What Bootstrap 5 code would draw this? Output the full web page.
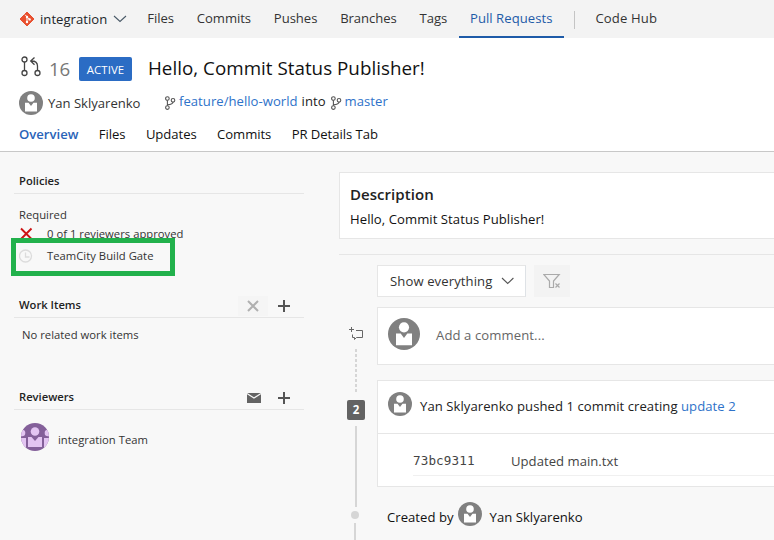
<!DOCTYPE html>
<html lang="en">
<head>
<meta charset="utf-8">
<meta name="viewport" content="width=device-width, initial-scale=1">
<title>Pull Request 16</title>
<link href="https://cdn.jsdelivr.net/npm/bootstrap@5.3.0/dist/css/bootstrap.min.css" rel="stylesheet">
<style>
body{font-family:"Open Sans","Noto Sans",sans-serif;font-size:13.1px;line-height:18px;letter-spacing:.03px;color:#212121;background:#f8f8f8;height:540px;white-space:nowrap}
a{color:#2e72c9}
svg{display:block;flex:none}
.hub-nav{height:38px;background:#f3f3f3;padding-left:19px}
.hub-name{margin-left:5px}
.hub-nav .nav-link{padding:0;height:38px;line-height:37px;color:#333;letter-spacing:-.05px;margin-right:22.8px}
.hub-nav .nav-link.active{color:#1e5ba8;border-bottom:2px solid #1e5ba8;letter-spacing:.04px;padding:0 12px 0 11px;margin:0 10px 0 -11px}
.hub-nav .nav-link:last-child{letter-spacing:.15px}
.hub-sep{width:1px;height:18px;background:#c4c4c4;margin-right:20px;margin-top:2px}
.pr-head{height:114px;border-bottom:1px solid #c8c8c8;padding:16px 0 0 19px}
.title-row{height:29px}
.pr-id{font-size:18.7px;color:#777;letter-spacing:-.3px;width:29px;padding-left:7px}
.state{width:53px;height:24px;background:#2b6cc4;border-radius:2px;font-size:11.4px;letter-spacing:.05px;line-height:25px;font-weight:400;padding:0}
.pr-title{font-size:18.8px;font-weight:400;letter-spacing:.02px;line-height:28px;margin:-2px 0 0 16px;color:#111}
.who-row{height:24px;margin-top:8px}
.who-name{width:121px;color:#333;padding-left:5px;letter-spacing:-.02px}
.pr-tabs{margin-top:9px;gap:20.4px;color:#111}
.pr-tabs .nav-link{padding:0;color:#111;line-height:20px;letter-spacing:-.05px}
.pr-tabs .nav-link.active{color:#2a63b8;font-weight:600;letter-spacing:0}
.side{width:290px;margin-left:14px;font-size:11.25px;letter-spacing:.02px;line-height:16px;color:#333}
.side-h{font-weight:600;font-size:11.2px;letter-spacing:0;padding-left:5px;border-bottom:1px solid #e6e6e6;color:#222;height:24px;line-height:22px}
.side-btn{width:30px;height:20px}
.side-add{margin-left:1px;margin-right:5px}
.policy{height:22px;padding-left:5px}
.policy svg{margin-right:13px}
.mark-box{left:11px;top:238px;width:164px;height:38px;border:5px solid #22b14c}
.main-col{margin-left:35px;min-width:0}
.panel{background:#fff;border:1px solid #e6e6e6;border-right:0}
.desc{height:67px;margin-top:20px;padding:10px 0 0 10px;color:#111}
.desc h2{font-size:15px;font-weight:600;letter-spacing:.05px;line-height:22px;margin:0 0 5px;color:#222}
.desc div{letter-spacing:.06px}
.rule{height:1px;background:#e6e6e6;margin-top:15px}
.tl{width:38px}
.tl-dash{width:2px;height:45px;background:repeating-linear-gradient(#d6d6d6 0 3px,transparent 3px 5px)}
.tl-num{width:18px;height:20px;border-radius:2px;background:#636363;color:#fff;font-weight:700;font-size:11.5px;line-height:20px;text-align:center;letter-spacing:0}
.tl-line{width:2px;background:#d6d6d6}
.tl-dot{width:8px;height:8px;background:#d6d6d6}
.filter{width:149px;height:32px;padding-left:12px;color:#333;letter-spacing:.1px}
.clear-f{width:36px;height:32px;background:#f3f3f3}
.comment{height:58px;margin-top:10px;padding:0 0 2px 10px;color:#666;letter-spacing:.1px}
.push{height:107px;margin-top:15px}
.push-top{height:53px;border-bottom:1px solid #e6e6e6;padding:0 0 2px 10px;letter-spacing:.06px}
.commit{margin-left:35px;height:42px;border-bottom:1px solid #f0f0f0;color:#444;padding-top:12px}
.hash{font-family:"DejaVu Sans Mono",monospace;font-size:12.6px;letter-spacing:.12px;width:98px}
.created{margin:15px 0 0 10px;color:#111}
.created span{padding-top:2px}
</style>
</head>
<body class="overflow-hidden">
<svg width="0" height="0" class="position-absolute">
  <defs>
    <symbol id="person" viewBox="0 0 24 24">
      <circle cx="12" cy="12" r="12" fill="#808080"/>
      <circle cx="12" cy="7" r="3.800" fill="#fff"/>
      <path d="M6 11.700h3.500l2.500 3.300 2.500-3.300H18v8.800H6z" fill="#fff"/>
    </symbol>
    <symbol id="branch" viewBox="0 0 12 14">
      <g fill="none" stroke="#555" stroke-width="1.1"><circle cx="3.4" cy="2.5" r="1.8"/><circle cx="3.4" cy="11.6" r="1.8"/><circle cx="9" cy="4.3" r="1.8"/><path d="M3.4 4.3v5.5M9 6.100c0 2-1.500 2.500-5.600 2.600"/></g>
    </symbol>
    <symbol id="plus" viewBox="0 0 12 12"><path d="M0 6h12M6 0v12" stroke="#555" stroke-width="2"/></symbol>
  </defs>
</svg>

<nav class="hub-nav d-flex align-items-center">
  <svg width="16" height="16" viewBox="0 0 16 16"><path d="M8 1l7 7-7 7-7-7z" fill="#e8502f" stroke="#e8502f" stroke-width="1" stroke-linejoin="round"/><path d="M6 3.700l2 2v5.300M8 6l2.600 2.300" stroke="#fff" stroke-width="1" fill="none"/><circle cx="8" cy="6" r="1.200" fill="#fff"/><circle cx="8" cy="11" r="1.200" fill="#fff"/><circle cx="10.600" cy="8.400" r="1.200" fill="#fff"/></svg>
  <span class="hub-name text-dark">integration</span>
  <svg class="ms-1 me-3" width="16" height="12" viewBox="0 0 16 12"><path d="M3 3l6 5.500L15 3" fill="none" stroke="#4a5a68" stroke-width="1.100"/></svg>
  <div class="nav flex-nowrap ps-1 align-items-center">
    <a class="nav-link" href="#">Files</a>
    <a class="nav-link" href="#">Commits</a>
    <a class="nav-link" href="#">Pushes</a>
    <a class="nav-link" href="#">Branches</a>
    <a class="nav-link" href="#">Tags</a>
    <a class="nav-link active" href="#">Pull Requests</a>
    <span class="hub-sep"></span>
    <a class="nav-link" href="#">Code Hub</a>
  </div>
</nav>

<header class="pr-head bg-white">
  <div class="title-row d-flex align-items-center">
    <svg width="23" height="22" viewBox="0 0 23 22" class="mb-1"><g fill="none" stroke="#444" stroke-width="1.300"><circle cx="5.500" cy="3.500" r="2.500"/><circle cx="5.500" cy="17" r="2.500"/><circle cx="18.500" cy="17" r="2.500"/><path d="M5.500 6v8.500M18.500 14.500V10c0-3.500-1.500-5-6-5M15.500 1.500l-3.800 3.500 3.800 3.800"/></g></svg>
    <span class="pr-id">16</span>
    <span class="badge state ms-2">ACTIVE</span>
    <h1 class="pr-title">Hello, Commit Status Publisher!</h1>
  </div>
  <div class="who-row d-flex align-items-center">
    <svg width="24" height="24"><use href="#person"/></svg>
    <span class="who-name">Yan Sklyarenko</span>
    <div class="d-flex align-items-center pb-1">
      <svg width="12" height="14" class="mt-1"><use href="#branch"/></svg>
      <a class="text-decoration-none me-1" href="#" style="margin-left:3px">feature/hello-world</a>
      <span>into</span>
      <svg width="12" height="14" class="ms-1 mt-1"><use href="#branch"/></svg>
      <a class="text-decoration-none" href="#" style="margin-left:3px">master</a>
    </div>
  </div>
  <div class="pr-tabs nav flex-nowrap">
    <a class="nav-link active" href="#">Overview</a>
    <a class="nav-link" href="#">Files</a>
    <a class="nav-link" href="#">Updates</a>
    <a class="nav-link" href="#">Commits</a>
    <a class="nav-link" href="#">PR Details Tab</a>
  </div>
</header>

<div class="d-flex">
  <aside class="side flex-shrink-0">
    <div class="side-h" style="margin-top:18px">Policies</div>
    <div class="ps-1" style="margin-top:13px"><div style="padding-left:1px">Required</div></div>
    <div class="policy d-flex align-items-center">
      <svg width="15" height="14" viewBox="0 0 15 14"><path d="M2 1.500l10.500 10.500M12.500 1.500L2 12" stroke="#cc1414" stroke-width="1.900"/></svg>
      <span>0 of 1 reviewers approved</span>
    </div>
    <div class="policy d-flex align-items-center">
      <svg width="15" height="14" viewBox="0 0 15 14"><g fill="none" stroke="#dcdcdc" stroke-width="1.300"><circle cx="6.500" cy="7" r="6"/><path d="M6.500 3.500V8h4"/></g></svg>
      <span>TeamCity Build Gate</span>
    </div>
    <div class="side-h d-flex align-items-center" style="margin-top:27px">
      <span class="flex-grow-1" style="padding-bottom:2px">Work Items</span>
      <span class="side-btn d-flex justify-content-center align-items-center" style="background:#f5f5f5"><svg width="12" height="12" viewBox="0 0 12 12"><path d="M1 1l10 10M11 1L1 11" stroke="#b0b0b0" stroke-width="2"/></svg></span>
      <span class="side-btn side-add d-flex justify-content-center align-items-center"><svg width="12" height="12"><use href="#plus"/></svg></span>
    </div>
    <div class="ps-2" style="margin-top:9px">No related work items</div>
    <div class="side-h d-flex align-items-center" style="margin-top:43px">
      <span class="flex-grow-1" style="padding-bottom:2px">Reviewers</span>
      <span class="side-btn d-flex justify-content-center align-items-center" style="padding-left:2px"><svg width="14" height="10" viewBox="0 0 14 10"><path d="M0 0h14v10H0z" fill="#636363"/><path d="M0 .5l7 4.500 7-4.500" fill="none" stroke="#f8f8f8" stroke-width="1.100"/></svg></span>
      <span class="side-btn side-add d-flex justify-content-center align-items-center"><svg width="12" height="12"><use href="#plus"/></svg></span>
    </div>
    <div class="d-flex align-items-center" style="margin-top:13px;padding-left:7px">
      <svg width="28" height="28" viewBox="0 0 28 28"><clipPath id="disc"><circle cx="14" cy="14" r="14"/></clipPath><g clip-path="url(#disc)"><path d="M0 0h28v28H0z" fill="#84609a"/><g fill="#e3c5f2"><circle cx="14" cy="8.500" r="4.300"/><path d="M7 14h3.500l3.500 4 3.500-4H21v10H7z"/><circle cx="1" cy="10" r="3.300"/><circle cx="27" cy="10" r="3.300"/><path d="M0 15h5v9H0zM23 15h5v9h-5z"/></g></g></svg>
      <span style="padding:6px 0 0 9px">integration Team</span>
    </div>
  </aside>

  <main class="main-col flex-grow-1">
    <section class="panel desc">
      <h2>Description</h2>
      <div>Hello, Commit Status Publisher!</div>
    </section>
    <div class="rule"></div>
    <div class="d-flex">
      <div class="tl d-flex flex-column align-items-start flex-shrink-0">
        <svg width="16" height="15" viewBox="0 0 16 15" style="margin:71px 0 8px 10px"><path d="M0 3.500h5M2.500 1v5" stroke="#666"/><path d="M7 4.500h6.500v7H7.500L5.500 13.500v-2H3.500V8.500" fill="none" stroke="#666"/></svg>
        <span class="tl-dash" style="margin-left:16px"></span>
        <span class="tl-num" style="margin:6px 0 6px 8px">2</span>
        <span class="tl-line" style="height:81px;margin-left:16px"></span>
        <span class="tl-dot rounded-circle" style="margin:4px 0 4px 12px"></span>
        <span class="tl-line" style="height:17px;margin-left:15px"></span>
      </div>
      <div class="flex-grow-1">
        <div class="d-flex" style="margin-top:10px">
          <div class="panel filter border-end d-flex align-items-center">Show everything
            <svg class="ms-2" width="14" height="10" viewBox="0 0 14 10"><path d="M2 2l5.700 5.500L13.400 2" fill="none" stroke="#555" stroke-width="1.100"/></svg>
          </div>
          <div class="clear-f ms-2 d-flex align-items-center justify-content-center"><svg width="18" height="16" viewBox="0 0 18 16"><g fill="none" stroke="#aaa" stroke-width="1.200"><path d="M.8 1.500h15.400L10.500 8v6.500h-4V8z"/><path d="M12.500 10.500l4 4M16.500 10.500l-4 4"/></g></svg></div>
        </div>
        <section class="panel comment d-flex align-items-center">
          <svg width="32" height="32" style="margin-bottom:2px"><use href="#person"/></svg>
          <span class="ms-3">Add a comment...</span>
        </section>
        <section class="panel push">
          <div class="push-top d-flex align-items-center">
            <svg width="24" height="24" class="mb-1"><use href="#person"/></svg>
            <span class="ms-2">Yan Sklyarenko pushed 1 commit creating <a class="text-decoration-none" href="#">update 2</a></span>
          </div>
          <div class="commit d-flex align-items-center"><span class="hash">73bc9311</span><span>Updated main.txt</span></div>
        </section>
        <div class="created d-flex align-items-center">
          <span>Created by</span>
          <svg width="24" height="24" class="ms-1 me-2 mb-1"><use href="#person"/></svg>
          <span>Yan Sklyarenko</span>
        </div>
      </div>
    </div>
  </main>
</div>
<div class="mark-box position-absolute"></div>
</body>
</html>
